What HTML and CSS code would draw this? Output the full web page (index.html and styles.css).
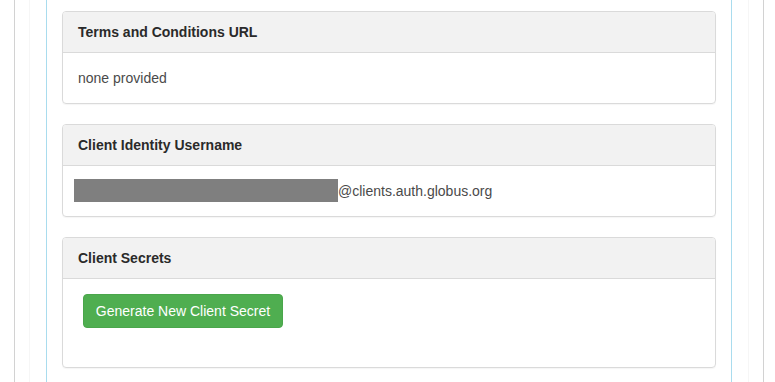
FILE: index.html
```html
<!DOCTYPE html>
<html lang="en">
<head>
  <meta charset="UTF-8" />
  <meta name="viewport" content="width=device-width, initial-scale=1.0" />
  <title>Client Details</title>
  <link rel="stylesheet" href="styles.css">
</head>
<body>
  <div class="frame">
    <div class="frame-inner">
      <div class="content">

        <div class="panel">
          <div class="panel-heading">Terms and Conditions URL</div>
          <div class="panel-body">none provided</div>
        </div>

        <div class="panel">
          <div class="panel-heading">Client Identity Username</div>
          <div class="panel-body">
            <span class="redacted"></span>@clients.auth.globus.org
          </div>
        </div>

        <div class="panel">
          <div class="panel-heading">Client Secrets</div>
          <div class="panel-body">
            <div class="secret-actions">
              <button class="btn-success">Generate New Client Secret</button>
            </div>
          </div>
        </div>

      </div>
    </div>
  </div>
</body>
</html>
```

FILE: styles.css
```css
* { box-sizing: border-box; }
html, body { height: 100%; }
body {
  margin: 0;
  font-family: 'Liberation Sans', Arial, sans-serif;
  font-size: 14px;
  line-height: 20px;
  color: #333;
  background: #fff;
}

/* nested page borders */
.frame {
  margin: 0 11px 0 14px;
  min-height: 100%;
  padding: 0 14px;
  border-left: 1px solid #d2d2d2;
  border-right: 1px solid #d2d2d2;
  display: flex;
}
.frame-inner {
  flex: 1;
  padding: 0 16px;
  border-left: 1px solid #f6f6f6;
  border-right: 1px solid #f6f6f6;
  display: flex;
}
.content {
  flex: 1;
  padding: 11px 15px 0;
  border-left: 1px solid #a9dcee;
  border-right: 1px solid #a9dcee;
}

.panel {
  border: 1px solid #dadada;
  border-radius: 4px;
  margin-bottom: 20px;
  box-shadow: 0 1px 1px rgba(0,0,0,0.04);
}
.panel-heading {
  background-color: #f2f2f2;
  border-bottom: 1px solid #dadada;
  border-radius: 3px 3px 0 0;
  padding: 10px 15px;
  font-weight: bold;
  color: #2a2a2a;
}
.panel-body {
  padding: 15px;
  color: #4a4a4a;
}

.redacted {
  display: inline-block;
  width: 264px;
  height: 23px;
  margin: -2px 0 -1px -4px;
  vertical-align: top;
  background: #7f7f7f;
}

.secret-actions {
  padding-left: 5px;
  margin-bottom: 24px;
}
.btn-success {
  font-family: inherit;
  font-size: 14px;
  line-height: 20px;
  padding: 6px 8px;
  width: 200px;
  white-space: nowrap;
  color: #fff;
  background-color: #4fae50;
  border: 1px solid #4aa64b;
  border-radius: 4px;
  cursor: pointer;
}
```
